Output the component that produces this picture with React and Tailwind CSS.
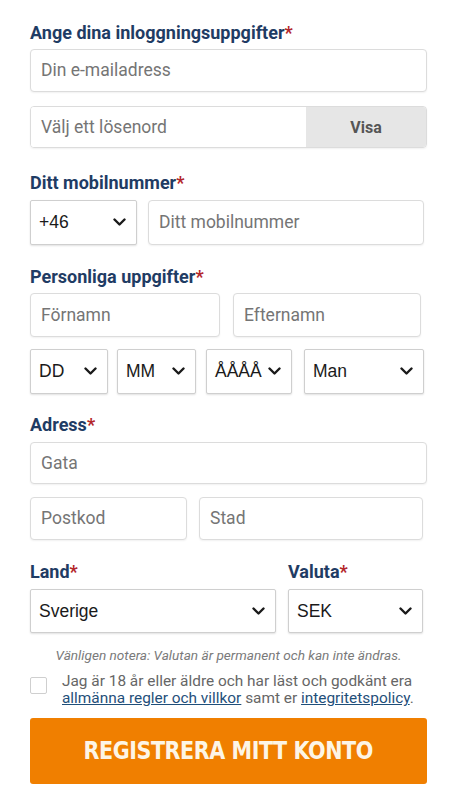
const Chevron = () => (
  <svg width="13" height="9" viewBox="0 0 13 9" className="shrink-0">
    <path d="M1.5 1.5 L6.5 6.5 L11.5 1.5" fill="none" stroke="#1a1a1a" strokeWidth="2.4" strokeLinecap="round" strokeLinejoin="round" />
  </svg>
);

const Heading = ({ children, className = '' }) => (
  <h2 className={`text-[18px] leading-5 font-bold text-[#1f3c64] ${className}`}>
    {children}
    <span className="text-[#b3262a]">*</span>
  </h2>
);

const Input = ({ placeholder, className = '' }) => (
  <div className={`flex items-center border border-[#dcdcdc] rounded-[4px] bg-white px-[10px] shadow-[0_1px_2px_rgba(0,0,0,0.06)] ${className}`}>
    <span className="text-[17.5px] text-[#757575]">{placeholder}</span>
  </div>
);

const Select = ({ value, className = '' }) => (
  <div className={`flex items-center justify-between border border-[#cfcfcf] rounded-[2px] bg-white pl-[8px] pr-[10px] shadow-[0_1px_2px_rgba(0,0,0,0.12)] ${className}`}>
    <span className="text-[17.5px] text-[#1a1a1a] font-['Liberation_Sans',Arial,sans-serif]">{value}</span>
    <Chevron />
  </div>
);

export default function App() {
  return (
    <div className="min-h-screen bg-white font-['Roboto',sans-serif]">
      <div className="w-[397px] ml-[30px] pt-[23px]">
        <Heading>Ange dina inloggningsuppgifter</Heading>
        <Input placeholder="Din e-mailadress" className="mt-[6px] h-[43px]" />
        <div className="mt-[14px] h-[42px] flex border border-[#dcdcdc] rounded-[4px] overflow-hidden shadow-[0_1px_2px_rgba(0,0,0,0.06)]">
          <div className="flex-1 flex items-center px-[10px] bg-white">
            <span className="text-[17.5px] text-[#757575]">Välj ett lösenord</span>
          </div>
          <div className="w-[120px] flex items-center justify-center bg-[#e6e6e6]">
            <span className="text-[16px] font-bold text-[#555] pt-[2px]">Visa</span>
          </div>
        </div>

        <Heading className="mt-[25px]">Ditt mobilnummer</Heading>
        <div className="mt-[7px] flex gap-[11px] w-[394px]">
          <Select value="+46" className="w-[107px] h-[45px]" />
          <Input placeholder="Ditt mobilnummer" className="flex-1 h-[45px]" />
        </div>

        <Heading className="mt-[22px]">Personliga uppgifter</Heading>
        <div className="mt-[6px] flex gap-[13px] w-[391px]">
          <Input placeholder="Förnamn" className="w-[190px] h-[44px]" />
          <Input placeholder="Efternamn" className="flex-1 h-[44px]" />
        </div>
        <div className="mt-[12px] flex w-[394px]">
          <Select value="DD" className="w-[78px] h-[45px]" />
          <Select value="MM" className="ml-[9px] w-[79px] h-[45px]" />
          <Select value="ÅÅÅÅ" className="ml-[10px] w-[86px] h-[45px] pl-[6px] pr-[7px]" />
          <Select value="Man" className="ml-[12px] flex-1 h-[45px]" />
        </div>

        <Heading className="mt-[21px]">Adress</Heading>
        <Input placeholder="Gata" className="mt-[7px] h-[42px]" />
        <div className="mt-[13px] flex gap-[12px] w-[393px]">
          <Input placeholder="Postkod" className="w-[157px] h-[43px]" />
          <Input placeholder="Stad" className="flex-1 h-[43px]" />
        </div>

        <div className="mt-[22px] flex gap-[12px] w-[393px]">
          <div className="w-[246px]">
            <Heading>Land</Heading>
            <Select value="Sverige" className="mt-[7px] h-[44px]" />
          </div>
          <div className="flex-1">
            <Heading>Valuta</Heading>
            <Select value="SEK" className="mt-[7px] h-[44px]" />
          </div>
        </div>

        <p className="mt-[14px] text-center text-[13.6px] leading-4 italic text-[#7a7a7a]">
          Vänligen notera: Valutan är permanent och kan inte ändras.
        </p>

        <div className="mt-[10px] flex items-start">
          <div className="mt-[4px] w-[17px] h-[17px] shrink-0 border border-[#cfcfcf] rounded-[2px] bg-white" />
          <p className="ml-[15px] text-[15.4px] leading-[17px] text-[#666]">
            Jag är 18 år eller äldre och har läst och godkänt era{' '}
            <a href="#" className="text-[#1f4f7a] underline">allmänna regler och villkor</a> samt er{' '}
            <a href="#" className="text-[#1f4f7a] underline">integritetspolicy</a>.
          </p>
        </div>

        <button className="mt-[11px] w-full h-[66px] rounded-[3px] bg-[#f07f00] flex items-center justify-center">
          <span className="inline-block scale-x-[0.92] text-[25px] font-bold tracking-[-0.5px] text-[#fdf5e6] font-['DejaVu_Sans_Condensed','DejaVu_Sans',sans-serif]">
            REGISTRERA MITT KONTO
          </span>
        </button>
      </div>
    </div>
  );
}
